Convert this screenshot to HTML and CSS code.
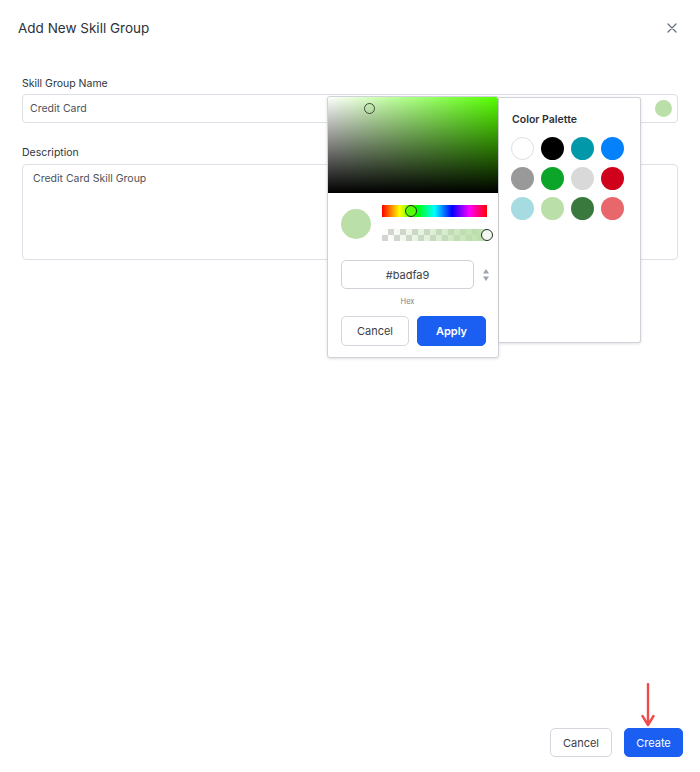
FILE: index.html
```html
<!DOCTYPE html>
<html lang="en">
<head>
<meta charset="utf-8">
<title>Add New Skill Group</title>
<link rel="stylesheet" href="styles.css">
</head>
<body>
<div class="modal">
  <header class="modal-header">
    <h1 class="modal-title">Add New Skill Group</h1>
    <button class="close-btn" aria-label="Close">
      <svg width="10" height="10" viewBox="0 0 10 10"><path d="M1 1L9 9M9 1L1 9" stroke="#6b7280" stroke-width="1.3" stroke-linecap="round"/></svg>
    </button>
  </header>

  <main class="modal-body">
    <div class="field">
      <label class="field-label">Skill Group Name</label>
      <div class="input with-swatch">
        <span class="input-text">Credit Card</span>
        <span class="swatch"></span>
      </div>
    </div>
    <div class="field field-desc">
      <label class="field-label">Description</label>
      <div class="textarea">Credit Card Skill Group</div>
    </div>

    <div class="color-popover">
      <div class="picker">
        <div class="sv-area">
          <span class="sv-thumb"></span>
        </div>
        <div class="picker-controls">
          <span class="preview"></span>
          <div class="sliders">
            <div class="hue-bar"><span class="hue-thumb"></span></div>
            <div class="alpha-bar"><span class="alpha-thumb"></span></div>
          </div>
        </div>
        <div class="hex-row">
          <div class="hex-input">#badfa9</div>
          <svg class="spinner" width="8" height="14" viewBox="0 0 8 14"><path d="M4 1L7 5.5H1Z" fill="#9ca3af"/><path d="M4 13L7 8.5H1Z" fill="#9ca3af"/></svg>
        </div>
        <div class="hex-label">Hex</div>
        <div class="picker-actions">
          <button class="btn btn-outline btn-sm">Cancel</button>
          <button class="btn btn-primary btn-sm">Apply</button>
        </div>
      </div>
      <div class="palette">
        <div class="palette-title">Color Palette</div>
        <div class="palette-grid">
          <span class="dot dot-white"></span>
          <span class="dot dot-black"></span>
          <span class="dot dot-teal"></span>
          <span class="dot dot-blue"></span>
          <span class="dot dot-gray"></span>
          <span class="dot dot-green"></span>
          <span class="dot dot-lightgray"></span>
          <span class="dot dot-red"></span>
          <span class="dot dot-lightblue"></span>
          <span class="dot dot-lightgreen"></span>
          <span class="dot dot-darkgreen"></span>
          <span class="dot dot-salmon"></span>
        </div>
      </div>
    </div>
  </main>

  <footer class="modal-footer">
    <button class="btn btn-outline">Cancel</button>
    <div class="create-wrap">
      <svg class="arrow" width="14" height="44" viewBox="0 0 14 44"><path d="M7 1V40" stroke="#ef4b4b" stroke-width="2.4" stroke-linecap="round"/><path d="M1.5 33L7 42L12.5 33" fill="none" stroke="#ef4b4b" stroke-width="2.4" stroke-linecap="round" stroke-linejoin="round"/></svg>
      <button class="btn btn-primary">Create</button>
    </div>
  </footer>
</div>
</body>
</html>
```

FILE: styles.css
```css
* { box-sizing: border-box; }
html, body { margin: 0; padding: 0; background: #fff; }
body {
  font-family: Inter, "Noto Sans", "Liberation Sans", sans-serif;
  color: #2f343b;
}
button { font-family: inherit; cursor: pointer; }

.modal {
  width: 700px;
  height: 772px;
  display: flex;
  flex-direction: column;
  position: relative;
}

.modal-header {
  display: flex;
  justify-content: space-between;
  align-items: center;
  padding: 18px 23px 18px 18px;
}
.modal-title {
  margin: 0;
  font-size: 13.5px;
  font-weight: 400;
  line-height: 20px;
  color: #2d3138;
}
.close-btn {
  border: 0;
  background: none;
  padding: 0;
  width: 10px;
  height: 10px;
  display: flex;
}

.modal-body {
  position: relative;
  padding: 20px 22px 0 22px;
  flex: 1;
}
.field { display: flex; flex-direction: column; }
.field-desc { margin-top: 22px; }
.field-label {
  font-size: 10.5px;
  line-height: 14px;
  color: #30353c;
  padding-top: 1px;
  margin-bottom: 3px;
}
.field-desc .field-label { margin-bottom: 4px; }

.input {
  height: 29px;
  border: 1px solid #dcdfe5;
  border-radius: 4px;
  display: flex;
  align-items: center;
  justify-content: space-between;
  padding: 0 5px 0 7px;
}
.input-text { font-size: 10.5px; color: #4d525a; }
.swatch {
  width: 17px;
  height: 17px;
  border-radius: 50%;
  background: #badfa9;
}
.textarea {
  height: 96px;
  border: 1px solid #dcdfe5;
  border-radius: 4px;
  padding: 7px 10px;
  font-size: 10.5px;
  line-height: 14px;
  color: #4d525a;
}

/* color popover */
.color-popover {
  position: absolute;
  left: 327px;
  top: 40px;
  display: flex;
  align-items: flex-start;
}
.picker {
  width: 172px;
  height: 262px;
  background: #fff;
  border: 1px solid #cfd2d8;
  border-radius: 3px;
  box-shadow: 0 1px 3px rgba(0,0,0,0.12);
  display: flex;
  flex-direction: column;
  overflow: hidden;
}
.sv-area {
  position: relative;
  height: 96px;
  flex: none;
  border-radius: 2px 2px 0 0;
  background:
    linear-gradient(to top, #000, rgba(0,0,0,0)),
    linear-gradient(to right, #fff, #55ff00);
}
.sv-thumb {
  position: absolute;
  left: 36px;
  top: 6px;
  width: 11px;
  height: 11px;
  border-radius: 50%;
  border: 1px solid #3f4a3a;
}
.picker-controls {
  display: flex;
  align-items: center;
  padding: 12px 0 0 13px;
  gap: 11px;
}
.preview {
  width: 30px;
  height: 30px;
  border-radius: 50%;
  background: #badfa9;
  flex: none;
  margin-top: 2px;
}
.sliders { display: flex; flex-direction: column; gap: 12px; }
.hue-bar {
  position: relative;
  width: 105px;
  height: 12px;
  background: linear-gradient(to right, #f00 0%, #ff0 16.6%, #0f0 33.3%, #0ff 50%, #00f 66.6%, #f0f 83.3%, #f00 100%);
}
.hue-thumb {
  position: absolute;
  left: 23px;
  top: 0;
  width: 12px;
  height: 12px;
  border-radius: 50%;
  border: 1px solid #1f2a1a;
  background: #55ff00;
}
.alpha-bar {
  position: relative;
  width: 105px;
  height: 12px;
  background:
    linear-gradient(to right, rgba(186,223,169,0), rgba(186,223,169,1)),
    repeating-conic-gradient(#d4d4d4 0 25%, #fff 0 50%) 0 0 / 12px 12px;
}
.alpha-thumb {
  position: absolute;
  right: -6px;
  top: 0;
  width: 12px;
  height: 12px;
  border-radius: 50%;
  border: 1px solid #2a2f2a;
  background: #f3f8f0;
}
.hex-row {
  display: flex;
  align-items: center;
  padding: 19px 0 0 13px;
  gap: 6px;
}
.hex-input {
  width: 133px;
  height: 29px;
  border: 1px solid #cfd3d9;
  border-radius: 5px;
  display: flex;
  align-items: center;
  justify-content: center;
  font-size: 11px;
  color: #3b3f45;
}
.spinner { margin-left: 2px; }
.hex-label {
  font-size: 7.5px;
  color: #7d828a;
  text-align: center;
  width: 159px;
  margin-top: 8px;
}
.picker-actions {
  display: flex;
  gap: 8px;
  padding: 10px 0 0 13px;
}

.palette {
  width: 142px;
  height: 246px;
  margin-top: 1px;
  background: #fff;
  border: 1px solid #cfd2d8;
  border-left: 0;
  border-radius: 0 3px 3px 0;
  box-shadow: 0 1px 3px rgba(0,0,0,0.12);
  padding: 16px 0 0 12px;
}
.palette-title {
  font-size: 10.5px;
  font-weight: 600;
  color: #2d3138;
  line-height: 12px;
  margin-left: 1px;
}
.palette-grid {
  display: grid;
  grid-template-columns: repeat(4, 23px);
  grid-auto-rows: 23px;
  gap: 7px;
  margin-top: 11px;
}
.dot { width: 23px; height: 23px; border-radius: 50%; display: block; }
.dot-white { background: #fff; border: 1px solid #dedede; }
.dot-black { background: #000; }
.dot-teal { background: #0199a9; }
.dot-blue { background: #0581fb; }
.dot-gray { background: #999; }
.dot-green { background: #0ba52a; }
.dot-lightgray { background: #d9d9d9; }
.dot-red { background: #d0021b; }
.dot-lightblue { background: #a7dbe2; }
.dot-lightgreen { background: #badfa9; }
.dot-darkgreen { background: #3a793e; }
.dot-salmon { background: #e8676b; }

/* buttons */
.btn {
  height: 29px;
  border-radius: 5px;
  font-size: 11px;
  padding: 0;
}
.btn-outline {
  background: #fff;
  border: 1px solid #d4d8de;
  color: #3b4048;
  width: 62px;
}
.btn-primary {
  background: #1a5ff2;
  border: 1px solid #1a5ff2;
  color: #fff;
  width: 59px;
}
.btn-sm { height: 30px; width: 68px; }
.picker-actions .btn-primary { width: 69px; font-weight: 600; }

.modal-footer {
  display: flex;
  justify-content: flex-end;
  align-items: flex-end;
  gap: 12px;
  padding: 0 17px 15px 0;
}
.create-wrap { position: relative; display: flex; }
.arrow {
  position: absolute;
  left: 17px;
  top: -45px;
}
```
